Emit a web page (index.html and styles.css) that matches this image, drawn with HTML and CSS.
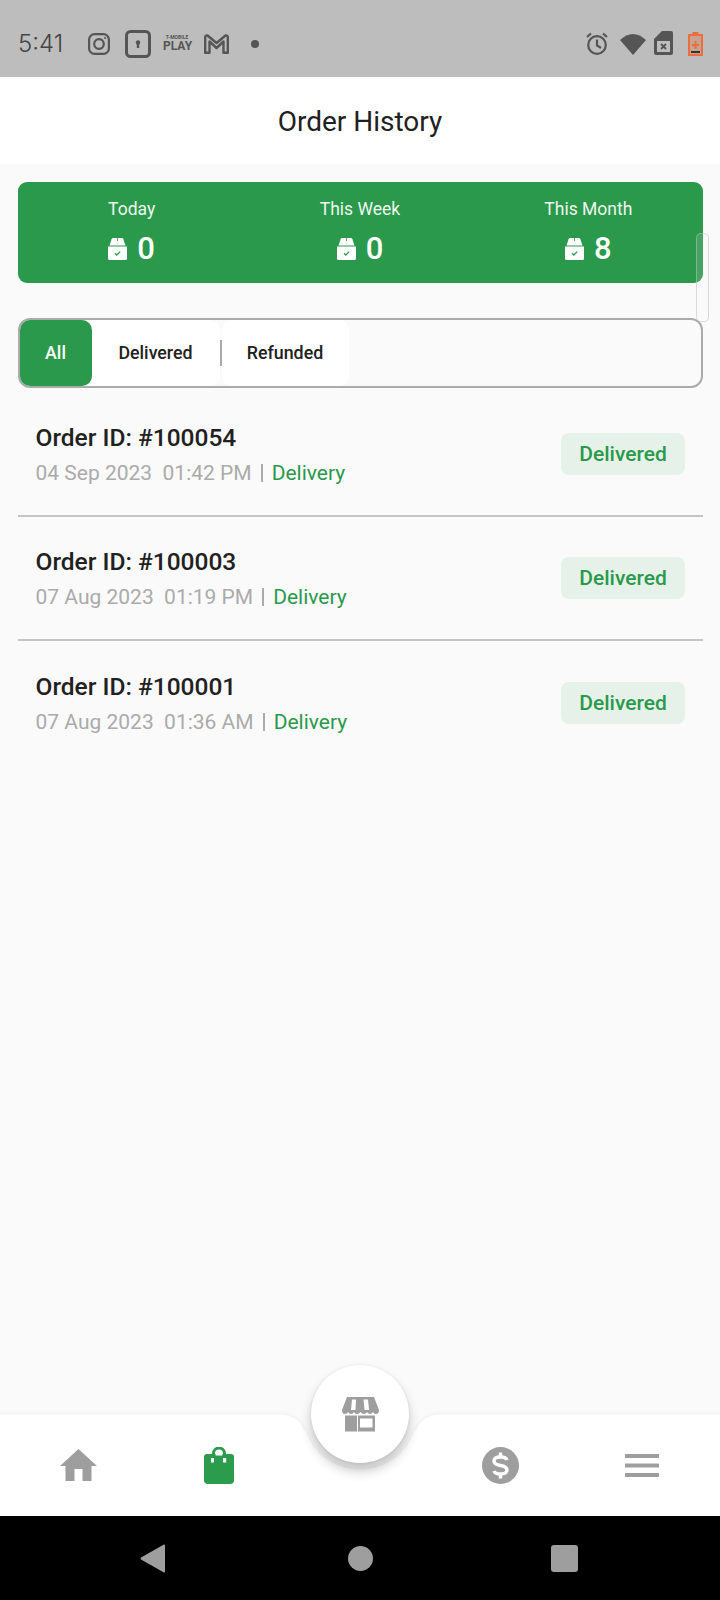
FILE: index.html
```html
<!DOCTYPE html>
<html lang="en">
<head>
    <meta charset="UTF-8">
    <meta name="viewport" content="width=device-width, initial-scale=1.0">
    <title>Order History</title>
    <link rel="stylesheet" href="styles.css">
</head>
<body>
    <svg class="icon-defs" width="0" height="0" aria-hidden="true">
        <symbol id="box" viewBox="0 0 19 22">
            <path d="M1.500 7.600 3.600 1.200Q4 0 5.200 0H13.800Q15 0 15.400 1.200L17.500 7.600Z" fill="#fff"/>
            <path d="M9.500 0V3" stroke="#2b9b4c" stroke-width=".8"/>
            <path d="M0 8.500h19V20.500Q19 22 17.500 22H1.500Q0 22 0 20.500Z" fill="#fff"/>
            <path d="m7 15.200 1.800 1.800 3.400-3.400" fill="none" stroke="#2b9b4c" stroke-width="1.300"/>
        </symbol>
    </svg>

    <div class="app">
        <!-- Status bar -->
        <div class="status-bar">
            <span class="status-time">5:41</span>
            <svg class="st-insta" width="22" height="22" viewBox="0 0 22 22" fill="none" stroke="#555" stroke-width="2.200">
                <rect x="1.100" y="1.100" width="19.800" height="19.800" rx="5.500"/>
                <circle cx="11" cy="11" r="4.800"/>
                <circle cx="17" cy="5" r="1" fill="#555" stroke="none"/>
            </svg>
            <svg class="st-key" width="26" height="28" viewBox="0 0 26 28">
                <rect x="1.500" y="1.500" width="23" height="25" rx="4" fill="none" stroke="#555" stroke-width="3"/>
                <circle cx="13" cy="12.500" r="2.200" fill="#555"/>
                <rect x="11.800" y="13" width="2.400" height="5" fill="#555"/>
            </svg>
            <div class="st-play">
                <span class="st-play-small">T-MOBILE</span>
                <span class="st-play-big">PLAY</span>
            </div>
            <svg class="st-gmail" width="25" height="20" viewBox="0 0 25 20" fill="none" stroke="#555" stroke-width="2.400" stroke-linejoin="round">
                <path d="M1.200 18.800V3Q1.200 1.200 3.500 1.500L12.500 9 21.500 1.500Q23.800 1.200 23.800 3V18.800H19.500V7.500L12.500 14 5.500 7.500V18.800Z"/>
            </svg>
            <span class="st-dot"></span>

            <div class="status-right">
                <svg class="st-alarm" width="22" height="23" viewBox="0 0 22 23" fill="none" stroke="#555" stroke-width="2.200">
                    <circle cx="11" cy="13" r="8.800"/>
                    <path d="M11 7.500V13.500L15 16M1 5 5 1.500M21 5 17 1.500"/>
                </svg>
                <svg class="st-wifi" width="26" height="22" viewBox="0 0 26 22">
                    <path d="M0 7Q13-5 26 7L13 22Z" fill="#555"/>
                </svg>
                <svg class="st-sim" width="19" height="24" viewBox="0 0 19 24">
                    <path d="M8 0H17Q19 0 19 2V22Q19 24 17 24H2Q0 24 0 22V8Z" fill="#555"/>
                    <rect x="3" y="10" width="13" height="11" fill="#bdbdbd"/>
                    <path d="m7 13 5 5M12 13l-5 5" stroke="#555" stroke-width="1.800"/>
                </svg>
                <svg class="st-batt" width="15" height="24" viewBox="0 0 15 24">
                    <path d="M4.500 0h6v2H15V24H0V2H4.500Z" fill="#ef6c3e"/>
                    <rect x="2" y="4" width="11" height="18" fill="#c9a392"/>
                    <rect x="3" y="19" width="9" height="2" fill="#333"/>
                    <path d="M6.500 9h2v3h2.500v2h-2.500v3h-2v-3H4v-2h2.500Z" fill="#ef6c3e"/>
                </svg>
            </div>
        </div>

        <!-- Header -->
        <header class="page-header">Order History</header>

        <main class="content">
            <!-- Totals -->
            <section class="stats-card">
                <div class="stat">
                    <div class="stat-label">Today</div>
                    <div class="stat-value"><svg class="stat-icon"><use href="#box"/></svg>0</div>
                </div>
                <div class="stat">
                    <div class="stat-label">This Week</div>
                    <div class="stat-value"><svg class="stat-icon"><use href="#box"/></svg>0</div>
                </div>
                <div class="stat">
                    <div class="stat-label">This Month</div>
                    <div class="stat-value"><svg class="stat-icon"><use href="#box"/></svg>8</div>
                </div>
            </section>

            <!-- Filter tabs -->
            <div class="tabs">
                <div class="tab tab-active">All</div>
                <div class="tab tab-delivered">Delivered</div>
                <span class="tab-divider"></span>
                <div class="tab tab-refunded">Refunded</div>
            </div>

            <!-- Orders -->
            <div class="order-row">
                <div>
                    <div class="order-id">Order ID: #100054</div>
                    <div class="order-meta">04 Sep 2023&nbsp;&nbsp;01:42 PM<span class="order-sep"></span><span class="order-type">Delivery</span></div>
                </div>
                <span class="badge">Delivered</span>
            </div>
            <div class="order-row">
                <div>
                    <div class="order-id">Order ID: #100003</div>
                    <div class="order-meta">07 Aug 2023&nbsp;&nbsp;01:19 PM<span class="order-sep"></span><span class="order-type">Delivery</span></div>
                </div>
                <span class="badge">Delivered</span>
            </div>
            <div class="order-row order-row-last">
                <div>
                    <div class="order-id">Order ID: #100001</div>
                    <div class="order-meta">07 Aug 2023&nbsp;&nbsp;01:36 AM<span class="order-sep"></span><span class="order-type">Delivery</span></div>
                </div>
                <span class="badge">Delivered</span>
            </div>

            <div class="scroll-ghost"></div>
        </main>

        <!-- Bottom navigation -->
        <nav class="bottom-nav">
            <svg class="nav-shape" width="720" height="102" viewBox="0 0 720 102">
                <path d="M0 0H280Q298 0 305 16A58 58 0 0 0 415 16Q422 0 441 0H720V102H0Z" fill="#fff"/>
                <path d="M0 0H280Q298 0 305 16M415 16Q422 0 441 0H720" fill="none" stroke="#f2f2f2" stroke-width="1"/>
            </svg>
            <div class="nav-item">
                <svg width="37" height="32" viewBox="0 0 37 32">
                    <path d="M18.500 0 37 17H31.500V32H22.500V20H14.500V32H5.500V17H0Z" fill="#9e9e9e"/>
                </svg>
            </div>
            <div class="nav-item">
                <svg width="30" height="37" viewBox="0 0 30 37">
                    <path d="M9.500 9V6.500A5.500 5.500 0 0 1 20.500 6.500V9" fill="none" stroke="#2b9b4c" stroke-width="3"/>
                    <path d="M3 7H27Q30 7 30 10V33Q30 37 26 37H4Q0 37 0 33V10Q0 7 3 7Z" fill="#2b9b4c"/>
                    <path d="M7 11h3v4.500H7ZM19 11h3.200v4.500H19Z" fill="#fff"/>
                    <path d="M11.500 8.500A3.500 3.500 0 0 1 18.500 8.500Z" fill="#fff"/>
                </svg>
            </div>
            <div class="nav-item"></div>
            <div class="nav-item">
                <svg width="37" height="37" viewBox="0 0 37 37">
                    <circle cx="18.500" cy="18.500" r="18.500" fill="#9e9e9e"/>
                    <path d="M25 13Q24 10 18.500 10 12 10 12 14 12 17.500 18.500 18.500 25 19.500 25 23 25 27 18.500 27 13 27 12 24" fill="none" stroke="#fff" stroke-width="3.400"/>
                    <path d="M18.500 5.500V10M18.500 27V31.500" stroke="#fff" stroke-width="3.400"/>
                </svg>
            </div>
            <div class="nav-item">
                <svg width="34" height="23" viewBox="0 0 34 23" fill="#9e9e9e">
                    <rect width="34" height="4"/>
                    <rect y="9.500" width="34" height="4"/>
                    <rect y="19" width="34" height="4"/>
                </svg>
            </div>
            <button class="fab" type="button" aria-label="Store">
                <svg width="37" height="35" viewBox="0 0 37 35">
                    <path d="M5 0H32L37 13Q37 17 34 17 31.500 17 31 15 30 17 28 17 26 17 25 15 24 17 22 17 20 17 18.500 15 17 17 15 17 13 17 12 15 11 17 9 17 7 17 6 15 5.500 17 3 17 0 17 0 13Z" fill="#9e9e9e"/>
                    <path d="M10 2.500H14L13.500 13H9ZM21.500 2.500H26L27 13H22.500Z" fill="#fff"/>
                    <path d="M3 18.500H15V34.500H3ZM16 18.500H33V34.500H16ZM18 21.500V30.500H30.500V21.500Z" fill="#9e9e9e" fill-rule="evenodd"/>
                </svg>
            </button>
        </nav>

        <!-- System navigation -->
        <div class="system-bar">
            <svg class="sys-back" width="26" height="29" viewBox="0 0 26 29">
                <path d="M25 1.500V27.500Q25 29 23.500 28.200L1 15.500Q0 14.500 1 13.500L23.500.8Q25 0 25 1.500Z" fill="#9e9e9e"/>
            </svg>
            <span class="sys-home"></span>
            <span class="sys-recent"></span>
        </div>
    </div>
</body>
</html>
```

FILE: styles.css
```css
/* Page */
body {
    margin: 0;
    font-family: Roboto, "Noto Sans", sans-serif;
    background-color: #fafafa;
}

.icon-defs {
    display: block;
    height: 0;
}

.app {
    display: flex;
    flex-direction: column;
    width: 720px;
    height: 1600px;
    overflow: hidden;
}

/* Status bar */
.status-bar {
    display: flex;
    align-items: center;
    flex: 0 0 77px;
    box-sizing: border-box;
    padding: 10px 17px 0 18px;
    background-color: #bdbdbd;
    color: #555;
}

.status-time {
    width: 70px;
    font-family: Inter, sans-serif;
    font-size: 24px;
    font-weight: 300;
    color: #444;
}

.st-key {
    margin-left: 15px;
}

.st-play {
    display: flex;
    flex-direction: column;
    margin-left: 12px;
    width: 28px;
    font-weight: 700;
    line-height: 1;
    text-align: center;
}

.st-play-small {
    font-size: 5px;
}

.st-play-big {
    font-size: 12px;
}

.st-gmail {
    margin-left: 13px;
}

.st-dot {
    width: 8px;
    height: 8px;
    margin-left: 22px;
    border-radius: 50%;
    background-color: #555;
}

.status-right {
    display: flex;
    align-items: center;
    margin-left: auto;
}

.st-wifi {
    margin-left: 12px;
}

.st-sim {
    margin-left: 8px;
    margin-top: -2px;
}

.st-batt {
    margin-left: 15px;
}

/* Header */
.page-header {
    flex: 0 0 87px;
    box-sizing: border-box;
    padding-top: 2px;
    line-height: 85px;
    text-align: center;
    font-size: 28px;
    color: #212121;
    background-color: #fff;
}

/* Content */
.content {
    position: relative;
    flex: 1;
    padding: 18px 17.5px 0;
}

.stats-card {
    display: grid;
    grid-template-columns: repeat(3, 1fr);
    height: 101px;
    border-radius: 9px;
    background-color: #2a994b;
    color: #fff;
}

.stat {
    text-align: center;
}

.stat-label {
    margin-top: 16px;
    font-size: 17.5px;
    line-height: 22px;
    color: #eef7f0;
}

.stat-value {
    display: flex;
    justify-content: center;
    align-items: center;
    gap: 10px;
    margin-top: 10px;
    font-size: 31px;
    font-weight: 500;
    line-height: 38px;
}

.stat-icon {
    width: 19px;
    height: 22px;
}

/* Tabs */
.tabs {
    display: flex;
    align-items: stretch;
    box-sizing: border-box;
    height: 70px;
    margin: 35px 0 5px;
    padding: 0;
    border: 2px solid #ababab;
    border-radius: 12px;
}

.tab {
    display: flex;
    justify-content: center;
    align-items: center;
    padding-bottom: 1px;
    box-sizing: border-box;
    font-size: 17.8px;
    font-weight: 460;
    color: #212121;
    background-color: #fff;
    border-radius: 10px;
}

.tab-active {
    position: relative;
    z-index: 1;
    width: 72px;
    color: #fff;
    background-color: #2a994b;
}

.tab-delivered {
    width: 138px;
    margin-left: -10px;
    padding-left: 10px;
}

.tab-divider {
    align-self: center;
    width: 2px;
    height: 26px;
    background-color: #aaa;
}

.tab-refunded {
    width: 127px;
}

/* Order rows */
.order-row {
    display: flex;
    justify-content: space-between;
    align-items: center;
    box-sizing: border-box;
    height: 124px;
    padding: 0 17.5px 0 18px;
    border-bottom: 2px solid #c4c4c4;
}

.order-row-last {
    border-bottom: 0;
}

.order-id {
    font-size: 24.5px;
    font-weight: 460;
    line-height: 30px;
    color: #212121;
}

.order-meta {
    display: flex;
    align-items: center;
    margin-top: 7px;
    font-size: 21px;
    line-height: 26px;
    color: #ababab;
}

.order-sep {
    width: 2px;
    height: 18px;
    margin: 0 9px 0 9px;
    background-color: #ababab;
}

.order-type {
    color: #2a994b;
}

.badge {
    display: flex;
    justify-content: center;
    align-items: center;
    width: 124px;
    height: 42px;
    border-radius: 8px;
    font-size: 21px;
    font-weight: 460;
    color: #2a994b;
    background-color: #e6f2e9;
}

.scroll-ghost {
    position: absolute;
    top: 69px;
    right: 11px;
    width: 11px;
    height: 87px;
    border: 1px solid rgba(190, 190, 190, 0.55);
    border-radius: 5px;
    background-color: rgba(255, 255, 255, 0.12);
}

/* Bottom navigation */
.bottom-nav {
    position: relative;
    display: grid;
    grid-template-columns: repeat(5, 1fr);
    flex: 0 0 102px;
    box-sizing: border-box;
    padding: 0 8px;
}

.nav-shape {
    position: absolute;
    top: 0;
    left: 0;
    filter: drop-shadow(0 -1px 1px rgba(0, 0, 0, 0.03));
}

.nav-item {
    position: relative;
    display: flex;
    justify-content: center;
    align-items: center;
}

.fab {
    position: absolute;
    top: -49px;
    left: 311px;
    display: flex;
    justify-content: center;
    align-items: center;
    width: 98px;
    height: 98px;
    padding: 0;
    border: 0;
    border-radius: 50%;
    background-color: #fff;
    box-shadow: 0 8px 12px rgba(0, 0, 0, 0.22), 0 0 3px rgba(0, 0, 0, 0.08);
}

/* System navigation */
.system-bar {
    display: flex;
    align-items: center;
    flex: 0 0 84px;
    box-sizing: border-box;
    padding-left: 140px;
    background-color: #000;
}

.sys-home {
    width: 25px;
    height: 25px;
    margin-left: 182px;
    border-radius: 50%;
    background-color: #9e9e9e;
}

.sys-recent {
    width: 27px;
    height: 27px;
    margin-left: 178px;
    border-radius: 3px;
    background-color: #9e9e9e;
}
```
